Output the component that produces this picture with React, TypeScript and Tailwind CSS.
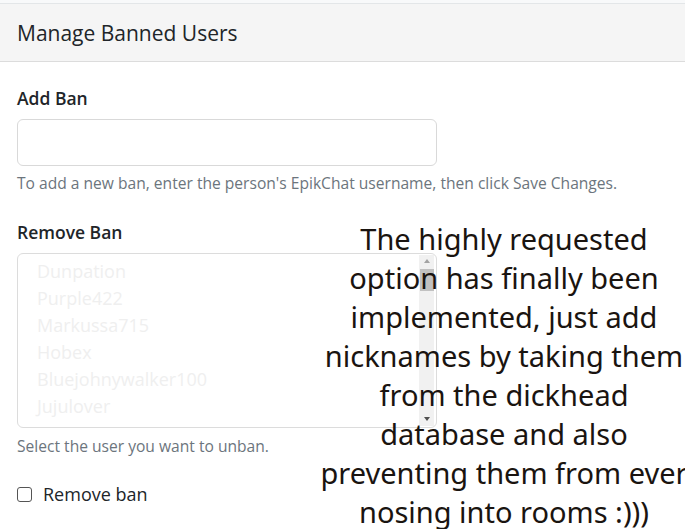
import React from "react";

const users = [
  "Dunpation",
  "Purple422",
  "Markussa715",
  "Hobex",
  "Bluejohnywalker100",
  "Jujulover",
  "Kittycat",
];

export default function App() {
  return (
    <div className="relative w-[685px] h-[529px] overflow-hidden bg-white font-['Open_Sans',sans-serif]">
      <div className="h-[4px] bg-[#f8f9fa] border-b border-[#e3e6e8]" />
      <div className="h-[58px] bg-[#f5f5f5] border-b border-[#dcdcdc] flex items-center px-[17px]">
        <h2 className="text-[21px] text-[#212529] pt-[2px]">Manage Banned Users</h2>
      </div>

      <div className="px-[17px] pt-[24px]">
        <label className="block text-[17.5px] font-semibold text-[#212529] leading-[24px]">Add Ban</label>
        <input className="mt-[9px] block w-[420px] h-[47px] rounded-[6px] border border-[#d9d9d9] outline-none" />
        <p className="mt-[7px] text-[15.6px] text-[#6c757d] leading-[21px] whitespace-nowrap">
          To add a new ban, enter the person's EpikChat username, then click Save Changes.
        </p>

        <label className="block mt-[26px] text-[17.5px] font-semibold text-[#212529] leading-[24px]">Remove Ban</label>
        <div className="mt-[9px] flex w-[420px] h-[175px] rounded-[6px] border border-[#dcdcdc] overflow-hidden">
          <ul className="flex-1 pl-[19px] pt-[4px] text-[18px] leading-[27px] text-[#efefef]">
            {users.map((u) => (
              <li key={u}>{u}</li>
            ))}
          </ul>
          <div className="w-[15px] mr-[2px] my-[1px] bg-[#f1f1f1] flex flex-col items-center">
            <span className="mt-[4px] w-0 h-0 border-x-[3px] border-x-transparent border-b-[4px] border-b-[#a3a3a3]" />
            <span className="mt-[6px] w-[14px] h-[22px] bg-[#c1c1c1]" />
            <span className="flex-1" />
            <span className="mb-[5px] w-0 h-0 border-x-[3px] border-x-transparent border-t-[4px] border-t-[#505050]" />
          </div>
        </div>
        <p className="mt-[8px] text-[15.6px] text-[#6c757d] leading-[21px]">Select the user you want to unban.</p>

        <div className="mt-[25px] flex items-center gap-[11px]">
          <span className="w-[15px] h-[15px] rounded-[3px] border-[1.5px] border-[#555]" />
          <span className="text-[18px] text-[#212529] leading-[24px]">Remove ban</span>
        </div>
      </div>

      <div className="absolute left-[316px] top-[219px] w-[376px] text-center text-[29px] leading-[39px] text-[#1a1410] font-['Noto_Sans',sans-serif]">
        The highly requested option has finally been implemented, just add nicknames by taking them from the dickhead database and also preventing them from ever nosing into rooms :)))
      </div>
    </div>
  );
}
